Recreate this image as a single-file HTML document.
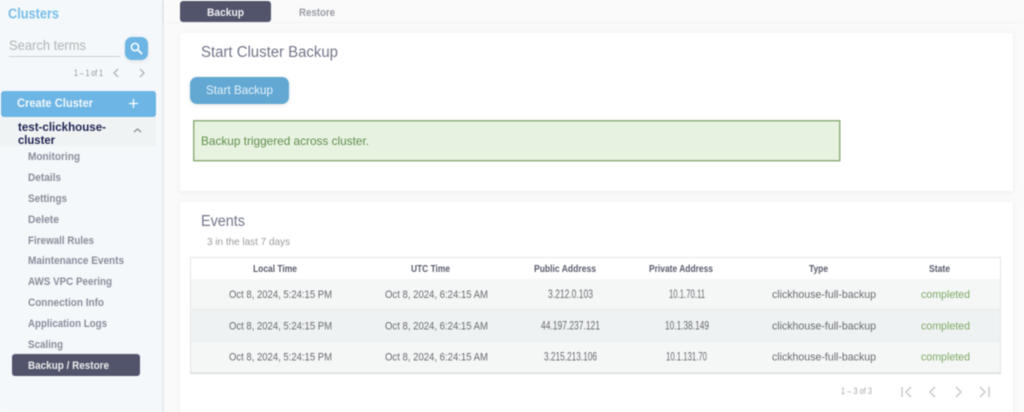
<!DOCTYPE html>
<html lang="en">
<head>
<meta charset="utf-8">
<title>Backup / Restore</title>
<style>
html,body{margin:0;padding:0;width:1024px;height:412px;overflow:hidden;background:#fafafa}
svg{display:block;font-family:"Liberation Sans",sans-serif;filter:blur(.45px)}
.m{font-size:11px;font-weight:700;fill:#8a8d9b}
.h{font-size:10px;font-weight:700;fill:#5a5c6e}
.r{font-size:11px;fill:#696b70}
.p{font-size:11.500px;fill:#696b70}
.s{font-size:11px;fill:#7fa865}
.t{font-size:15.500px;fill:#73768a}
.i{fill:none;stroke:#c4c6c8;stroke-width:1.4}
</style>
</head>
<body>
<svg width="1024" height="412" viewBox="0 0 1024 412" xmlns="http://www.w3.org/2000/svg">
<defs>
<filter id="sh" x="-5%" y="-15%" width="110%" height="135%"><feDropShadow dx="0" dy="1" stdDeviation="2" flood-color="#000" flood-opacity=".1"/></filter>
<filter id="sc" x="-2%" y="-3%" width="104%" height="106%"><feDropShadow dx="0" dy="1" stdDeviation="3" flood-color="#000" flood-opacity=".05"/></filter>
</defs>
<rect width="1024" height="412" fill="#fafafa"/>

<!-- sidebar -->
<rect x="0" y="0" width="163" height="412" fill="#f4f8fa"/>
<rect x="162" y="0" width="2" height="412" fill="#e8eaec"/>
<text x="8" y="18.500" textLength="51" lengthAdjust="spacingAndGlyphs" font-size="14.500" font-weight="700" fill="#78bdea">Clusters</text>
<text x="9" y="50" textLength="77" lengthAdjust="spacingAndGlyphs" font-size="14" fill="#b2b4b5">Search terms</text>
<rect x="9" y="56" width="111" height="1" fill="#cfd0d2"/>
<rect x="125" y="37" width="23" height="23" rx="7" fill="#6cb5e4" filter="url(#sh)"/>
<circle cx="135" cy="47" r="3.600" fill="none" stroke="#fff" stroke-width="1.500"/>
<path d="M138 50l4 4" stroke="#fff" stroke-width="1.700" fill="none"/>
<text x="74" y="76" textLength="29" lengthAdjust="spacingAndGlyphs" font-size="9.500" fill="#949698">1 – 1 of 1</text>
<path class="i" d="M118 69l-4 4 4 4M140 69l4 4-4 4" style="stroke:#b4b6b8"/>
<rect x="1" y="91" width="155" height="26" rx="3" fill="#6cb5e4"/>
<text x="17" y="107" textLength="76" lengthAdjust="spacingAndGlyphs" font-size="12" font-weight="700" fill="#f2f8fc">Create Cluster</text>
<path d="M133.500 99v9M129 103.500h9" stroke="#fff" stroke-width="1.300" fill="none"/>
<rect x="0" y="117" width="156" height="29" fill="#f0f3f3"/>
<text x="18" y="131" textLength="88" lengthAdjust="spacingAndGlyphs" font-size="12" font-weight="700" fill="#1f2553">test-clickhouse-</text>
<text x="18" y="144" textLength="37" lengthAdjust="spacingAndGlyphs" font-size="12" font-weight="700" fill="#1f2553">cluster</text>
<path d="M134 132l3.500-3 3.500 3" fill="none" stroke="#85878c" stroke-width="1.200"/>

<text class="m" x="28" y="160" textLength="52" lengthAdjust="spacingAndGlyphs">Monitoring</text>
<text class="m" x="28" y="181" textLength="33" lengthAdjust="spacingAndGlyphs">Details</text>
<text class="m" x="28" y="202" textLength="39" lengthAdjust="spacingAndGlyphs">Settings</text>
<text class="m" x="28" y="223" textLength="31" lengthAdjust="spacingAndGlyphs">Delete</text>
<text class="m" x="28" y="244" textLength="66" lengthAdjust="spacingAndGlyphs">Firewall Rules</text>
<text class="m" x="28" y="264" textLength="96" lengthAdjust="spacingAndGlyphs">Maintenance Events</text>
<text class="m" x="28" y="285" textLength="84" lengthAdjust="spacingAndGlyphs">AWS VPC Peering</text>
<text class="m" x="28" y="306" textLength="76" lengthAdjust="spacingAndGlyphs">Connection Info</text>
<text class="m" x="28" y="327" textLength="79" lengthAdjust="spacingAndGlyphs">Application Logs</text>
<text class="m" x="28" y="348" textLength="35" lengthAdjust="spacingAndGlyphs">Scaling</text>
<rect x="12" y="354" width="128" height="22" rx="3" fill="#51546a"/>
<text class="m" x="28" y="369" textLength="81" lengthAdjust="spacingAndGlyphs" style="fill:#eceded">Backup / Restore</text>

<!-- tab bar -->
<rect x="164" y="0" width="860" height="22" fill="#fafafa" filter="url(#sc)"/>
<rect x="180" y="1" width="91" height="21" rx="3" fill="#51546a"/>
<text x="207" y="16" textLength="37" lengthAdjust="spacingAndGlyphs" font-size="11" font-weight="700" fill="#f0f0f2">Backup</text>
<text x="299" y="16" textLength="36" lengthAdjust="spacingAndGlyphs" font-size="11" font-weight="700" fill="#9a9ca6">Restore</text>

<!-- card 1 -->
<rect x="180" y="33" width="833" height="158" fill="#fff" filter="url(#sc)"/>
<text class="t" x="201" y="57" textLength="137" lengthAdjust="spacingAndGlyphs">Start Cluster Backup</text>
<rect x="190" y="77" width="99" height="27" rx="7" fill="#62a8d3" filter="url(#sh)"/>
<text x="206" y="94" textLength="67" lengthAdjust="spacingAndGlyphs" font-size="12" fill="#e6f2f9">Start Backup</text>
<rect x="193.750" y="120.750" width="646" height="40" fill="#e8f2e1" stroke="#8fb07c" stroke-width="1.500"/>
<text x="201" y="145" textLength="168" lengthAdjust="spacingAndGlyphs" font-size="12" fill="#5f8e49">Backup triggered across cluster.</text>

<!-- card 2 -->
<rect x="180" y="202" width="833" height="215" fill="#fff" filter="url(#sc)"/>
<text class="t" x="201" y="226" textLength="44" lengthAdjust="spacingAndGlyphs">Events</text>
<text x="207" y="245" textLength="83" lengthAdjust="spacingAndGlyphs" font-size="10" fill="#9b9c9e">3 in the last 7 days</text>

<!-- table -->
<rect x="190" y="257" width="811" height="117" fill="#fff"/>
<rect x="190" y="279" width="811" height="30" fill="#f4f7f6"/>
<rect x="190" y="309" width="811" height="32" fill="#eff2f2"/>
<rect x="190" y="341" width="811" height="32" fill="#f4f7f6"/>
<rect x="190.500" y="257.500" width="810" height="115.500" fill="none" stroke="#e4e5e6"/>
<rect x="190" y="372.500" width="811" height="1.500" fill="#dcdedf"/>
<rect x="190" y="309" width="811" height="1" fill="#e8ebeb"/>
<rect x="190" y="340.500" width="811" height="1" fill="#e8ebeb"/>

<text class="h" x="253" y="272" textLength="44" lengthAdjust="spacingAndGlyphs">Local Time</text>
<text class="h" x="411" y="272" textLength="39" lengthAdjust="spacingAndGlyphs">UTC Time</text>
<text class="h" x="534" y="272" textLength="62" lengthAdjust="spacingAndGlyphs">Public Address</text>
<text class="h" x="649" y="272" textLength="64" lengthAdjust="spacingAndGlyphs">Private Address</text>
<text class="h" x="809" y="272" textLength="19" lengthAdjust="spacingAndGlyphs">Type</text>
<text class="h" x="929" y="272" textLength="21" lengthAdjust="spacingAndGlyphs">State</text>

<text class="r" x="229" y="298" textLength="103" lengthAdjust="spacingAndGlyphs">Oct 8, 2024, 5:24:15 PM</text>
<text class="r" x="385" y="298" textLength="103" lengthAdjust="spacingAndGlyphs">Oct 8, 2024, 6:24:15 AM</text>
<text class="p" x="548" y="298" textLength="45" lengthAdjust="spacingAndGlyphs">3.212.0.103</text>
<text class="p" x="669" y="298" textLength="36" lengthAdjust="spacingAndGlyphs">10.1.70.11</text>
<text class="r" x="772" y="298" textLength="104" lengthAdjust="spacingAndGlyphs">clickhouse-full-backup</text>
<text class="s" x="921" y="298" textLength="49" lengthAdjust="spacingAndGlyphs">completed</text>

<text class="r" x="229" y="329.500" textLength="103" lengthAdjust="spacingAndGlyphs">Oct 8, 2024, 5:24:15 PM</text>
<text class="r" x="385" y="329.500" textLength="103" lengthAdjust="spacingAndGlyphs">Oct 8, 2024, 6:24:15 AM</text>
<text class="p" x="541" y="329.500" textLength="59" lengthAdjust="spacingAndGlyphs">44.197.237.121</text>
<text class="p" x="665" y="329.500" textLength="44" lengthAdjust="spacingAndGlyphs">10.1.38.149</text>
<text class="r" x="772" y="329.500" textLength="104" lengthAdjust="spacingAndGlyphs">clickhouse-full-backup</text>
<text class="s" x="921" y="329.500" textLength="49" lengthAdjust="spacingAndGlyphs">completed</text>

<text class="r" x="229" y="360.500" textLength="103" lengthAdjust="spacingAndGlyphs">Oct 8, 2024, 5:24:15 PM</text>
<text class="r" x="385" y="360.500" textLength="103" lengthAdjust="spacingAndGlyphs">Oct 8, 2024, 6:24:15 AM</text>
<text class="p" x="544" y="360.500" textLength="53" lengthAdjust="spacingAndGlyphs">3.215.213.106</text>
<text class="p" x="666" y="360.500" textLength="41" lengthAdjust="spacingAndGlyphs">10.1.131.70</text>
<text class="r" x="772" y="360.500" textLength="104" lengthAdjust="spacingAndGlyphs">clickhouse-full-backup</text>
<text class="s" x="921" y="360.500" textLength="49" lengthAdjust="spacingAndGlyphs">completed</text>

<!-- pagination -->
<text x="841" y="394" textLength="31" lengthAdjust="spacingAndGlyphs" font-size="9.500" fill="#a5a7a9">1 – 3 of 3</text>
<path class="i" d="M902 387v10M911 387l-5 5 5 5M935 387l-5 5 5 5M956 387l5 5-5 5M980 387l5 5-5 5M989 387v10"/>
</svg>
</body>
</html>
